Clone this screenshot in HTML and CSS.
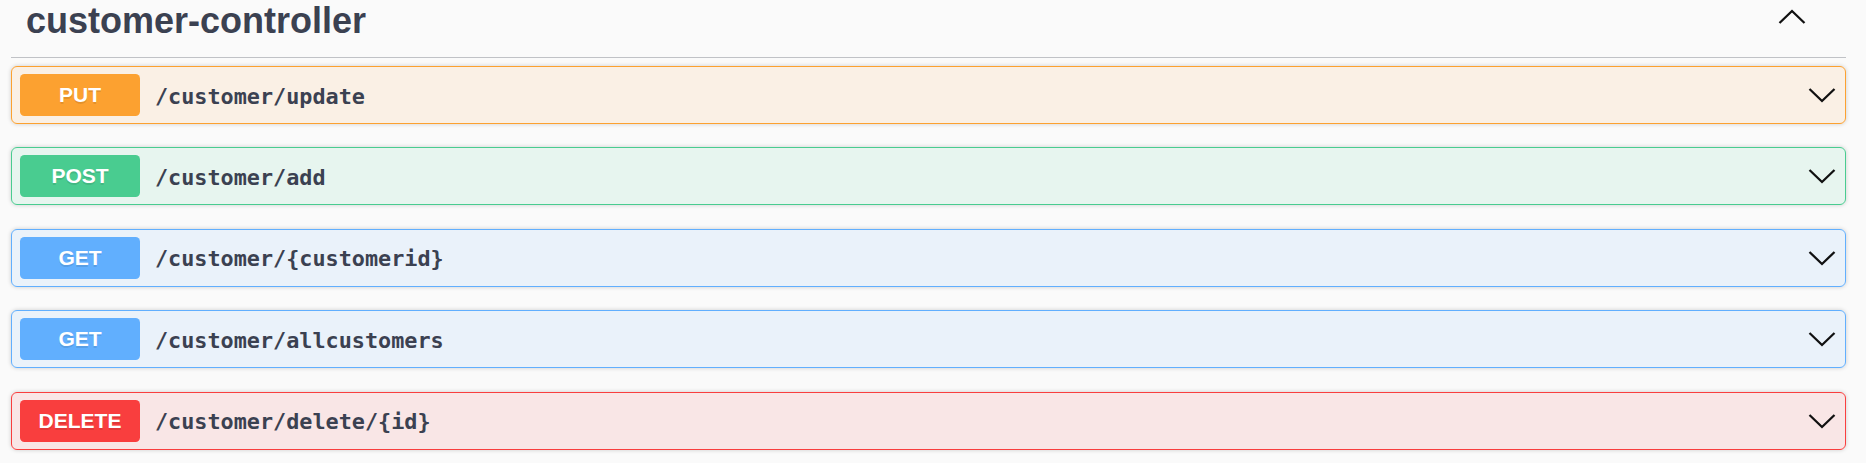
FILE: index.html
```html
<!DOCTYPE html>
<html>
<head>
<meta charset="utf-8">
<link rel="stylesheet" href="styles.css">
</head>
<body>
<div class="section">
  <h3 class="tag">
    <span class="tag-name">customer-controller</span>
    <button class="tag-toggle" aria-label="collapse">
      <svg width="28" height="16" viewBox="0 0 28 16"><polyline points="1.5,14 14,2 26.5,14" fill="none" stroke="#111" stroke-width="2.3"/></svg>
    </button>
  </h3>
  <div class="ops">
    <div class="op put">
      <div class="summary">
        <span class="method">PUT</span>
        <span class="path">/customer/update</span>
        <svg class="chev" width="28" height="16" viewBox="0 0 28 16"><polyline points="1.5,2 14,14 26.5,2" fill="none" stroke="#111" stroke-width="2.3"/></svg>
      </div>
    </div>
    <div class="op post">
      <div class="summary">
        <span class="method">POST</span>
        <span class="path">/customer/add</span>
        <svg class="chev" width="28" height="16" viewBox="0 0 28 16"><polyline points="1.5,2 14,14 26.5,2" fill="none" stroke="#111" stroke-width="2.3"/></svg>
      </div>
    </div>
    <div class="op get">
      <div class="summary">
        <span class="method">GET</span>
        <span class="path">/customer/{customerid}</span>
        <svg class="chev" width="28" height="16" viewBox="0 0 28 16"><polyline points="1.5,2 14,14 26.5,2" fill="none" stroke="#111" stroke-width="2.3"/></svg>
      </div>
    </div>
    <div class="op get">
      <div class="summary">
        <span class="method">GET</span>
        <span class="path">/customer/allcustomers</span>
        <svg class="chev" width="28" height="16" viewBox="0 0 28 16"><polyline points="1.5,2 14,14 26.5,2" fill="none" stroke="#111" stroke-width="2.3"/></svg>
      </div>
    </div>
    <div class="op delete">
      <div class="summary">
        <span class="method">DELETE</span>
        <span class="path">/customer/delete/{id}</span>
        <svg class="chev" width="28" height="16" viewBox="0 0 28 16"><polyline points="1.5,2 14,14 26.5,2" fill="none" stroke="#111" stroke-width="2.3"/></svg>
      </div>
    </div>
  </div>
</div>
</body>
</html>
```
FILE: styles.css
```css
html, body {
  margin: 0;
  padding: 0;
  background: #fafafa;
}

.section {
  padding: 0 20px 0 11px;
  font-family: "Liberation Sans", Arial, sans-serif;
  color: #3b4151;
}

.tag {
  display: flex;
  align-items: flex-start;
  margin: 0 0 8px 0;
  padding: 0 0 15px 15px;
  border-bottom: 1px solid rgba(59, 65, 81, 0.3);
  font-size: 36px;
  line-height: 42px;
  font-weight: 700;
  height: 42px;
}

.tag-name {
  flex: 1;
}

.tag-toggle {
  background: none;
  border: 0;
  padding: 0;
  margin: 9px 40px 0 0;
  width: 28px;
  height: 16px;
  display: block;
}

.tag-toggle svg {
  display: block;
}

.op {
  border: 1px solid;
  border-radius: 6px;
  box-shadow: 0 0 4px rgba(0, 0, 0, 0.19);
  margin-bottom: 23.4px;
}

.summary {
  display: flex;
  align-items: center;
  padding: 7px 8px 7px 8px;
}

.method {
  width: 120px;
  flex: none;
  padding: 9px 0;
  line-height: 24px;
  font-size: 21px;
  font-weight: 700;
  text-align: center;
  color: #fff;
  border-radius: 4.5px;
  text-shadow: 0 1.5px 0 rgba(0, 0, 0, 0.1);
}

.path {
  flex: 1;
  padding: 0 15px 0 15px;
  font-family: "DejaVu Sans Mono", monospace;
  font-size: 21.8px;
  font-weight: 700;
  color: #3b4151;
  position: relative;
  top: 1px;
}

.chev {
  display: block;
  flex: none;
  margin-right: 1px;
}

.put {
  border-color: #fca130;
  background: rgba(252, 161, 48, 0.1);
}
.put .method { background: #fca130; }

.post {
  border-color: #49cc90;
  background: rgba(73, 204, 144, 0.1);
}
.post .method { background: #49cc90; }

.get {
  border-color: #61affe;
  background: rgba(97, 175, 254, 0.1);
}
.get .method { background: #61affe; }

.delete {
  border-color: #f93e3e;
  background: rgba(249, 62, 62, 0.1);
}
.delete .method { background: #f93e3e; }
```
